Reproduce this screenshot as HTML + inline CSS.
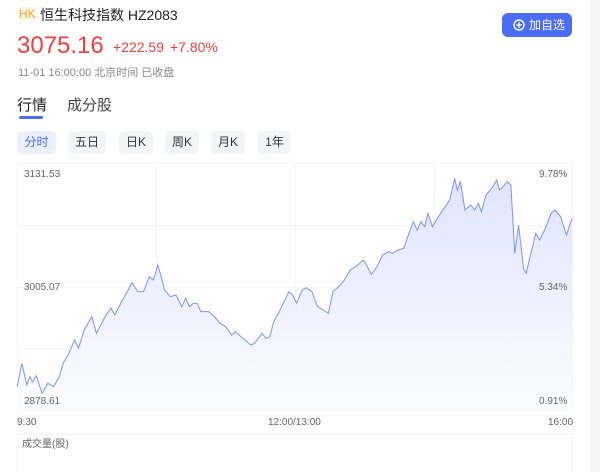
<!DOCTYPE html>
<html><head><meta charset="utf-8"><style>
body{margin:0;width:600px;height:472px;overflow:hidden;background:#fff;font-family:"Liberation Sans","Noto Sans CJK SC",sans-serif;position:relative}
.a{position:absolute;white-space:nowrap}
.btn{position:absolute;top:131px;height:23px;border-radius:5px;background:#f3f4f6;color:#333;font-size:12px;line-height:23px;text-align:center}
</style></head><body>
<div style="position:absolute;left:590px;top:0;width:10px;height:472px;background:#f5f5f5"></div>
<div class="a" style="left:18px;top:7px;font-size:12px;color:#f7a531;background:#fff6e8;padding:0 1px">HK</div>
<div class="a" style="left:40px;top:5px;font-size:14px;color:#222">恒生科技指数 HZ2083</div>
<div class="a" style="left:17px;top:32px;font-size:24px;color:#f23d3d">3075.16</div>
<div class="a" style="left:113px;top:39px;font-size:14px;color:#f23d3d">+222.59</div>
<div class="a" style="left:170px;top:39px;font-size:14px;color:#f23d3d">+7.80%</div>
<div class="a" style="left:18px;top:64px;font-size:11px;color:#888">11-01 16:00:00 北京时间 已收盘</div>
<div class="a" style="left:17px;top:94px;font-size:15px;color:#222">行情</div>
<div class="a" style="left:67px;top:94px;font-size:15px;color:#444">成分股</div>
<div style="position:absolute;left:19px;top:116px;width:24px;height:3px;background:#4a6cf7;border-radius:2px"></div>
<div class="btn" style="left:17px;width:39px;background:#ebefff;color:#4a6cf7">分时</div>
<div class="btn" style="left:68px;width:38px">五日</div>
<div class="btn" style="left:119px;width:34px">日K</div>
<div class="btn" style="left:165px;width:34px">周K</div>
<div class="btn" style="left:211px;width:34px">月K</div>
<div class="btn" style="left:258px;width:33px">1年</div>
<div style="position:absolute;left:502px;top:13px;width:70px;height:24px;border-radius:6px;background:#4a6cf7;color:#fff;font-size:12px;line-height:24px">
<svg style="position:absolute;left:11px;top:6px" width="12" height="12" viewBox="0 0 12 12"><circle cx="6" cy="6" r="5" fill="none" stroke="#fff" stroke-width="1.4"/><path d="M6 3.3v5.4M3.3 6h5.4" stroke="#fff" stroke-width="1.4"/></svg>
<span style="position:absolute;left:27px">加自选</span></div>
<svg class="a" style="left:0;top:0" width="600" height="472">
<defs><linearGradient id="g" x1="0" y1="0" x2="0" y2="1"><stop offset="0" stop-color="#dfe5fd"/><stop offset="1" stop-color="#fbfcff"/></linearGradient></defs>
<g stroke="#f5f5f5" stroke-width="1" fill="none">
<rect x="17.5" y="163.5" width="555" height="246"/>
<path d="M17 225.5H572M17 287.5H572M17 348.5H572M156.5 163V409M295.5 163V409M434.5 163V409"/>
<rect x="17.5" y="434.5" width="555" height="40"/>
</g>
<g id="c" transform="translate(0,160) scale(0.3827,0.33333)"></g>
<g font-size="10" fill="#666" font-family="Liberation Sans,sans-serif">
<text x="24" y="177">3131.53</text><text x="24" y="290">3005.07</text><text x="24" y="404">2878.61</text>
<text x="539" y="177">9.78%</text><text x="539" y="290">5.34%</text><text x="539" y="404">0.91%</text>
<text x="17" y="425">9:30</text><text x="268" y="425">12:00/13:00</text><text x="548" y="425">16:00</text>
<text x="22" y="447">成交量(股)</text>
</g>
</svg>
<script>
var p=[[45,680],[57,610],[70,675],[78,650],[85,665],[95,648],[110,700],[125,670],[140,680],[155,650],[165,610],[180,580],[195,540],[205,565],[220,510],[240,470],[252,520],[265,490],[280,460],[290,445],[300,465],[320,420],[335,390],[345,368],[360,395],[375,395],[390,350],[400,360],[405,345],[412,315],[420,345],[430,390],[445,410],[460,405],[475,440],[485,415],[495,440],[505,430],[515,430],[525,455],[545,455],[560,470],[575,490],[590,500],[605,525],[615,515],[625,525],[640,540],[655,555],[665,550],[685,520],[695,535],[705,530],[715,485],[730,455],[740,430],[755,395],[765,405],[775,430],[790,390],[800,383],[815,395],[830,440],[845,450],[858,460],[870,395],[885,380],[900,360],[915,330],[935,315],[950,300],[960,320],[970,343],[985,320],[1000,285],[1015,275],[1025,280],[1040,270],[1055,265],[1070,215],[1080,185],[1090,210],[1100,185],[1110,200],[1118,160],[1130,200],[1140,180],[1160,145],[1175,120],[1188,55],[1195,90],[1203,65],[1215,150],[1230,135],[1240,150],[1250,130],[1258,155],[1270,105],[1285,85],[1298,60],[1305,90],[1315,80],[1325,65],[1335,75],[1345,280],[1355,195],[1368,325],[1375,340],[1385,290],[1400,220],[1410,240],[1425,205],[1440,160],[1450,150],[1465,170],[1480,225],[1495,175]];
var d="M"+p.map(function(q){return q.join(",")}).join("L");
document.getElementById("c").innerHTML='<path d="'+d+'L1495,748L45,748Z" fill="url(#g)"/><path d="'+d+'" fill="none" stroke="#7b93f5" stroke-width="1" vector-effect="non-scaling-stroke"/>';
</script>
</body></html>
